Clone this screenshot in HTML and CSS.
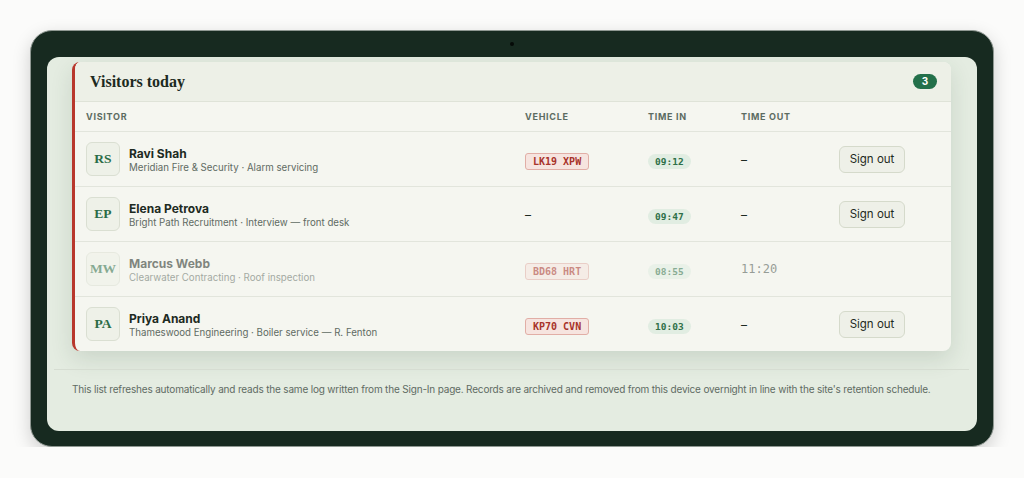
FILE: index.html
```html
<!DOCTYPE html>
<html lang="en">
<head>
    <meta charset="UTF-8">
    <meta name="viewport" content="width=device-width, initial-scale=1.0">
    <title>Visitors today</title>
    <link rel="stylesheet" href="styles.css">
</head>
<body>
    <div class="device">
        <span class="camera"></span>
        <div class="screen">
            <section class="card">
                <header class="card-head">
                    <h2>Visitors today</h2>
                    <span class="count">3</span>
                </header>

                <div class="row head-row">
                    <span>Visitor</span>
                    <span>Vehicle</span>
                    <span>Time in</span>
                    <span>Time out</span>
                    <span></span>
                </div>

                <div class="row">
                    <div class="visitor">
                        <span class="avatar">RS</span>
                        <div>
                            <p class="name">Ravi Shah</p>
                            <p class="meta">Meridian Fire &amp; Security · Alarm servicing</p>
                        </div>
                    </div>
                    <div><span class="plate">LK19 XPW</span></div>
                    <div><span class="time-in">09:12</span></div>
                    <div class="time-out">–</div>
                    <div><button class="sign-out">Sign out</button></div>
                </div>

                <div class="row">
                    <div class="visitor">
                        <span class="avatar">EP</span>
                        <div>
                            <p class="name">Elena Petrova</p>
                            <p class="meta">Bright Path Recruitment · Interview — front desk</p>
                        </div>
                    </div>
                    <div class="no-vehicle">–</div>
                    <div><span class="time-in">09:47</span></div>
                    <div class="time-out">–</div>
                    <div><button class="sign-out">Sign out</button></div>
                </div>

                <div class="row left">
                    <div class="visitor">
                        <span class="avatar">MW</span>
                        <div>
                            <p class="name">Marcus Webb</p>
                            <p class="meta">Clearwater Contracting · Roof inspection</p>
                        </div>
                    </div>
                    <div><span class="plate">BD68 HRT</span></div>
                    <div><span class="time-in">08:55</span></div>
                    <div class="time-out done">11:20</div>
                    <div></div>
                </div>

                <div class="row">
                    <div class="visitor">
                        <span class="avatar">PA</span>
                        <div>
                            <p class="name">Priya Anand</p>
                            <p class="meta">Thameswood Engineering · Boiler service — R. Fenton</p>
                        </div>
                    </div>
                    <div><span class="plate">KP70 CVN</span></div>
                    <div><span class="time-in">10:03</span></div>
                    <div class="time-out">–</div>
                    <div><button class="sign-out">Sign out</button></div>
                </div>
            </section>

            <footer class="note">
                This list refreshes automatically and reads the same log written from the Sign-In page. Records are archived and removed from this device overnight in line with the site's retention schedule.
            </footer>
        </div>
    </div>
</body>
</html>
```

FILE: styles.css
```css
body {
    margin: 0;
    background: #fbfbfa;
    font-family: 'Inter', 'Noto Sans', sans-serif;
    color: #1d2a22;
}

p {
    margin: 0;
}

/* tablet frame */
.device {
    position: relative;
    margin: 30px 30px 0 30px;
    width: 964px;
    height: 417px;
    box-sizing: border-box;
    padding: 26px 16px 15px 16px;
    background: #172a20;
    border: 1px solid #8f9892;
    border-radius: 22px;
    box-shadow: 0 6px 18px rgba(0, 0, 0, 0.18);
}

.camera {
    position: absolute;
    top: 11px;
    left: 479px;
    width: 4px;
    height: 4px;
    border-radius: 50%;
    background: #050a07;
}

.screen {
    height: 100%;
    box-sizing: border-box;
    padding: 5px 0 0 0;
    background: #e4ece1;
    border-radius: 12px;
    overflow: hidden;
}

.card {
    margin: 0 26px 0 25px;
    background: #f5f6f0;
    border-left: 3px solid #b8372c;
    border-radius: 8px;
    box-shadow: 0 8px 22px rgba(40, 70, 50, 0.14);
    overflow: hidden;
}

.card-head {
    display: flex;
    align-items: center;
    justify-content: space-between;
    height: 39px;
    padding: 0 14px 0 15px;
    background: #edf0e7;
    border-bottom: 1px solid #dfe3d8;
}

.card-head h2 {
    margin: 0;
    font-family: 'Liberation Serif', 'DejaVu Serif', serif;
    font-size: 16px;
    font-weight: bold;
    color: #1c2a21;
}

.count {
    display: inline-block;
    min-width: 24px;
    height: 15px;
    line-height: 15px;
    border-radius: 8px;
    background: #23704a;
    color: #fff;
    font-size: 10px;
    font-weight: 700;
    text-align: center;
}

.row {
    display: grid;
    grid-template-columns: 439px 123px 93px 98px 1fr;
    align-items: center;
    height: 54px;
    padding-left: 11px;
    border-bottom: 1px solid #e2e5dc;
}

.row:last-child {
    border-bottom: none;
}

.head-row {
    height: 29px;
    font-size: 9px;
    font-weight: 700;
    letter-spacing: 0.08em;
    text-transform: uppercase;
    color: #5c6b61;
}

.visitor {
    display: flex;
    align-items: center;
    gap: 9px;
}

.avatar {
    display: flex;
    align-items: center;
    justify-content: center;
    width: 32px;
    height: 32px;
    border: 1px solid #dadfd2;
    border-radius: 6px;
    background: #eef1e8;
    font-family: 'Liberation Serif', 'DejaVu Serif', serif;
    font-size: 13.5px;
    font-weight: bold;
    color: #2a6c46;
}

.name {
    font-size: 12px;
    font-weight: 650;
    color: #1d2a22;
    line-height: 15px;
    margin-top: 1px;
}

.meta {
    font-size: 9.7px;
    color: #5f6b63;
    line-height: 13px;
}

.plate {
    display: inline-block;
    padding: 2px 7px;
    border: 1px solid #e1aea6;
    border-radius: 3px;
    background: #f6e4df;
    font-family: 'DejaVu Sans Mono', 'Liberation Mono', monospace;
    font-size: 10px;
    font-weight: bold;
    color: #a8332a;
}

.time-in {
    display: inline-block;
    padding: 2px 7px;
    border-radius: 8px;
    background: #e1ede2;
    font-family: 'DejaVu Sans Mono', 'Liberation Mono', monospace;
    font-size: 9.5px;
    font-weight: bold;
    color: #2f7048;
}

.time-out,
.no-vehicle {
    font-size: 12px;
    color: #1d2a22;
}

.time-out.done {
    font-family: 'DejaVu Sans Mono', 'Liberation Mono', monospace;
    font-size: 12px;
    color: #4a544e;
}

.sign-out {
    width: 66px;
    height: 27px;
    border: 1px solid #d5dacb;
    border-radius: 6px;
    background: #eef0e8;
    font-family: 'Inter', 'Noto Sans', sans-serif;
    font-size: 11.5px;
    color: #1f2a22;
}

/* signed-out visitors are greyed back */
.row.left > * {
    opacity: 0.55;
}

.note {
    margin: 18px 8px 0 7px;
    padding: 13px 0 0 18px;
    border-top: 1px solid #d6ddd2;
    font-size: 10px;
    letter-spacing: -0.18px;
    white-space: nowrap;
    color: #5f6b63;
}
```
